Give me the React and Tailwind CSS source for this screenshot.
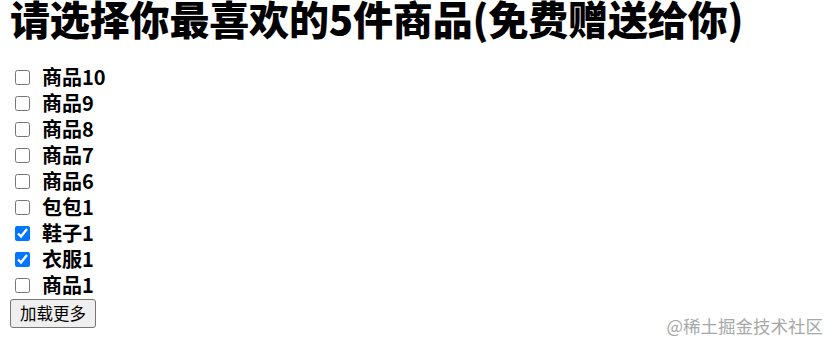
import React, { useState } from "react";

const initialItems = [
  { id: 10, name: "商品10", checked: false },
  { id: 9, name: "商品9", checked: false },
  { id: 8, name: "商品8", checked: false },
  { id: 7, name: "商品7", checked: false },
  { id: 6, name: "商品6", checked: false },
  { id: 5, name: "包包1", checked: false },
  { id: 4, name: "鞋子1", checked: true },
  { id: 3, name: "衣服1", checked: true },
  { id: 1, name: "商品1", checked: false },
];

export default function App() {
  const [items, setItems] = useState(initialItems);

  const toggle = (id) =>
    setItems((prev) =>
      prev.map((it) => (it.id === id ? { ...it, checked: !it.checked } : it))
    );

  return (
    <div
      className="relative w-[838px] h-[344px] overflow-hidden bg-white text-black px-[10px]"
      style={{ fontFamily: '"Noto Sans CJK SC", "Noto Sans", sans-serif' }}
    >
      <h1 className="text-[40px] font-black leading-[40px] tracking-[-0.15px] mt-[-2px] mb-[26px] whitespace-nowrap">
        请选择你最喜欢的5件商品(免费赠送给你)
      </h1>

      <ul className="flex flex-col">
        {items.map((it) => (
          <li key={it.id} className="flex items-center h-[26px]">
            <input
              type="checkbox"
              checked={it.checked}
              onChange={() => toggle(it.id)}
              className="w-[15px] h-[15px] ml-[5px] mr-[12px] accent-[#0075ff]"
            />
            <span className="text-[20px] font-bold leading-[26px]">{it.name}</span>
          </li>
        ))}
      </ul>

      <button className="mt-[1px] h-[29px] px-[9px] text-[16.5px] leading-none border border-[#767676] rounded-[3px] bg-[#efefef] text-black">
        加载更多
      </button>

      <div className="absolute right-[15px] bottom-[10px] text-[17.5px] leading-none text-[#a8a8a8]">
        @稀土掘金技术社区
      </div>
    </div>
  );
}
